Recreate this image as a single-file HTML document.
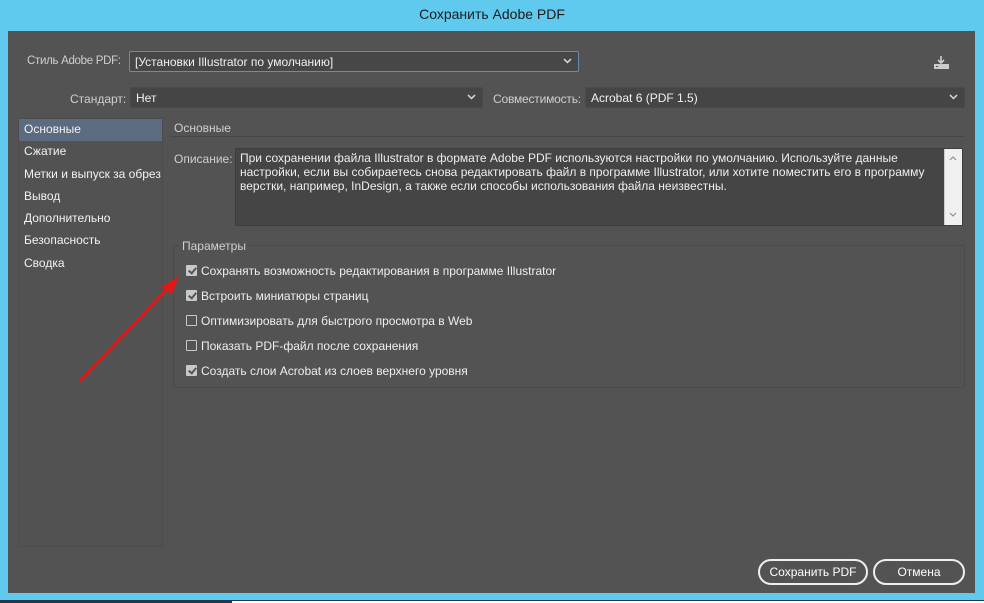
<!DOCTYPE html>
<html><head><meta charset="utf-8"><style>
*{margin:0;padding:0;box-sizing:border-box}
body{width:984px;height:603px;background:#5fc9ee;position:relative;overflow:hidden;font-family:"Liberation Sans","DejaVu Sans",sans-serif;font-size:12px;color:#e8e8e8}
.a{position:absolute}
.title{left:0;top:6px;width:984px;text-align:center;font-size:14px;color:#1c1c1c}
.panel{left:8px;top:31px;width:967px;height:562px;background:#535353}
.sel{background:#454545;border:1px solid #4a4a4a;border-radius:2px;height:21px;padding:3px 5px;color:#f0f0f0;white-space:nowrap}
.chev{position:absolute;right:6px;top:6px}
.lbl{color:#cfcfcf}
.side{left:18px;top:118px;width:145px;height:429px;border:1px solid #4c4c4c;background:#525252}
.side div{height:22.3px;padding:3px 5px;color:#f2f2f2;white-space:nowrap}
.side .on{background:#5b6b80}
.cb{position:absolute;width:11px;height:11px;border:1px solid #c8c8c8;border-radius:1px}
.cb.c{background:#c8c8c8}
.cb.c:after{content:"";position:absolute;left:2.5px;top:0px;width:3px;height:6px;border:solid #555;border-width:0 2px 2px 0;transform:rotate(40deg)}
.opt{position:absolute;left:201px;color:#eee;white-space:nowrap}
.btn{border:2px solid #eee;border-radius:13px;height:26px;text-align:center;line-height:22px;color:#fff}
</style></head><body>
<div class="a title">Сохранить Adobe PDF</div>
<div class="a panel"></div>
<div class="a lbl" style="left:27px;top:55px;font-size:11.5px;letter-spacing:-0.3px">Стиль Adobe PDF:</div>
<div class="a sel" style="left:129px;top:51px;width:450px;border-color:#6a8cb0;background:#474747">[Установки Illustrator по умолчанию]<svg class="chev" width="9" height="6"><path d="M1 1l3.5 3.5L8 1" stroke="#ddd" stroke-width="1.5" fill="none"/></svg></div>
<svg class="a" style="left:933px;top:56px" width="16" height="14"><path d="M8 0v7M5 4l3 3 3-3" stroke="#ccc" stroke-width="1.6" fill="none"/><rect x="1" y="8" width="15" height="5" fill="#ccc"/><rect x="3" y="10" width="2" height="1" fill="#535353"/></svg>
<div class="a lbl" style="left:70px;top:92px">Стандарт:</div>
<div class="a sel" style="left:130px;top:87px;width:353px">Нет<svg class="chev" width="9" height="6"><path d="M1 1l3.5 3.5L8 1" stroke="#ddd" stroke-width="1.5" fill="none"/></svg></div>
<div class="a lbl" style="left:493px;top:92px;letter-spacing:-0.2px">Совместимость:</div>
<div class="a sel" style="left:585px;top:87px;width:380px">Acrobat 6 (PDF 1.5)<svg class="chev" width="9" height="6"><path d="M1 1l3.5 3.5L8 1" stroke="#ddd" stroke-width="1.5" fill="none"/></svg></div>
<div class="a side">
<div class="on">Основные</div><div>Сжатие</div><div>Метки и выпуск за обрез</div><div>Вывод</div><div>Дополнительно</div><div>Безопасность</div><div>Сводка</div>
</div>
<div class="a lbl" style="left:174px;top:121px">Основные</div>
<div class="a" style="left:170px;top:136px;width:795px;height:1px;background:#474747"></div>
<div class="a lbl" style="left:174px;top:152px">Описание:</div>
<div class="a" style="left:235px;top:148px;width:728px;height:78px;background:#454545;border:1px solid #3e3e3e;padding:2px 24px 2px 4px;color:#eee;line-height:14px;font-size:12px">При сохранении файла Illustrator в формате Adobe PDF используются настройки по умолчанию. Используйте данные настройки, если вы собираетесь снова редактировать файл в программе Illustrator, или хотите поместить его в программу верстки, например, InDesign, а также если способы использования файла неизвестны.</div>
<div class="a" style="left:944px;top:149px;width:18px;height:76px;background:#f0f0f0;border-left:1px solid #ccc"></div>
<svg class="a" style="left:948px;top:155px" width="10" height="65"><path d="M2 5l3-3 3 3M2 58l3 3 3-3" stroke="#888" stroke-width="1" fill="none"/></svg>
<div class="a" style="left:173px;top:245px;width:792px;height:143px;border:1px solid #4a4a4a;border-radius:3px"></div>
<div class="a lbl" style="left:180px;top:239px;background:#535353;padding:0 2px">Параметры</div>
<div class="cb c" style="left:186px;top:265px"></div><div class="opt" style="top:264px">Сохранять возможность редактирования в программе Illustrator</div>
<div class="cb c" style="left:186px;top:290px"></div><div class="opt" style="top:289px">Встроить миниатюры страниц</div>
<div class="cb" style="left:186px;top:315px"></div><div class="opt" style="top:314px">Оптимизировать для быстрого просмотра в Web</div>
<div class="cb" style="left:186px;top:340px"></div><div class="opt" style="top:339px">Показать PDF-файл после сохранения</div>
<div class="cb c" style="left:186px;top:365px"></div><div class="opt" style="top:364px">Создать слои Acrobat из слоев верхнего уровня</div>
<svg class="a" style="left:0;top:0" width="984" height="603"><line x1="80" y1="381" x2="170" y2="286" stroke="#e01818" stroke-width="3"/><path d="M179 276L161 287L172 294Z" fill="#e01818"/></svg>
<div class="a btn" style="left:758px;top:559px;width:110px">Сохранить PDF</div>
<div class="a btn" style="left:873px;top:559px;width:92px">Отмена</div>
<div class="a" style="left:0;top:600px;width:984px;height:3px;background:#1f3a4a"></div>
<div class="a" style="left:232px;top:601px;width:752px;height:2px;background:#fff"></div>
</body></html>
